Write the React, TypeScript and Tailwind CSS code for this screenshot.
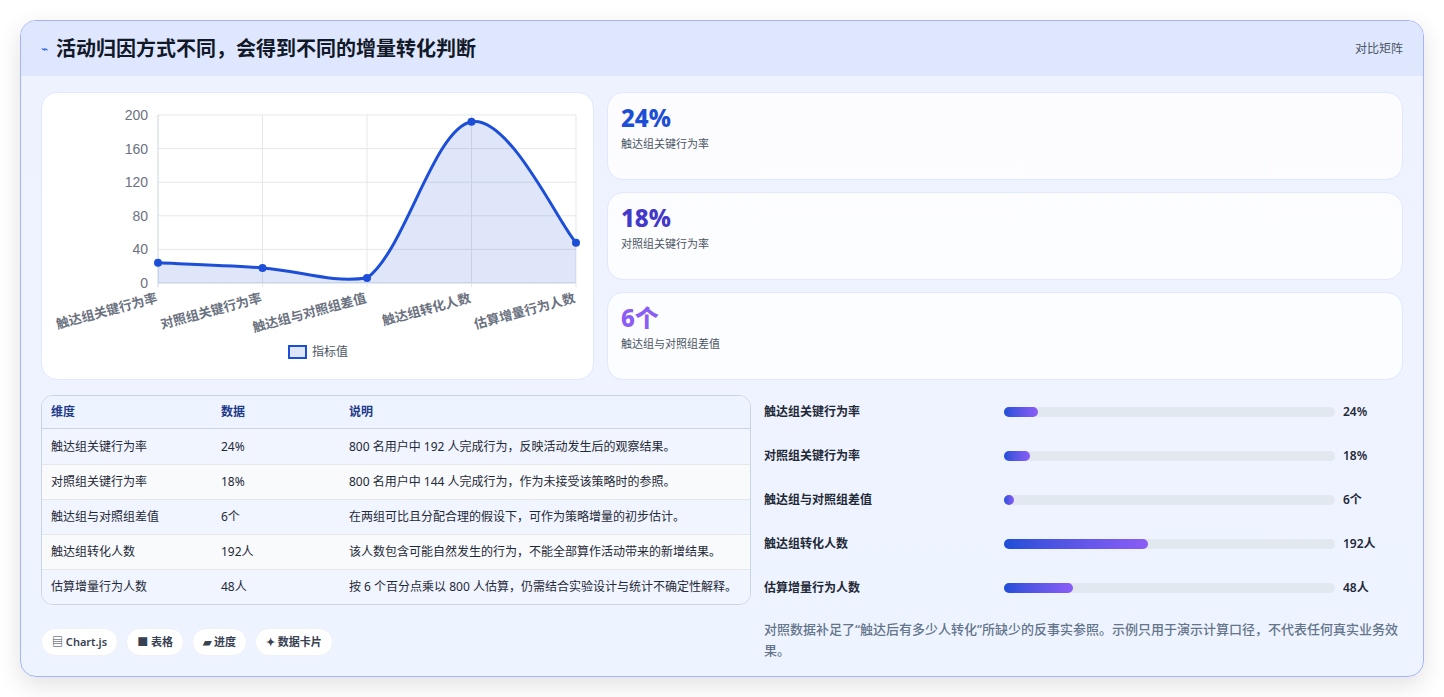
import React from "react";

const ROWS = [
  { k: "触达组关键行为率", v: "24%", d: "800 名用户中 192 人完成行为，反映活动发生后的观察结果。", w: 34 },
  { k: "对照组关键行为率", v: "18%", d: "800 名用户中 144 人完成行为，作为未接受该策略时的参照。", w: 26 },
  { k: "触达组与对照组差值", v: "6个", d: "在两组可比且分配合理的假设下，可作为策略增量的初步估计。", w: 10 },
  { k: "触达组转化人数", v: "192人", d: "该人数包含可能自然发生的行为，不能全部算作活动带来的新增结果。", w: 144 },
  { k: "估算增量行为人数", v: "48人", d: "按 6 个百分点乘以 800 人估算，仍需结合实验设计与统计不确定性解释。", w: 69 },
];

const VALS = [24, 18, 6, 192, 48];

function Chart() {
  const x0 = 116, x1 = 534, y0 = 22, y1 = 190;
  const pts = VALS.map((v, i) => [x0 + (i * (x1 - x0)) / 4, y1 - (v * (y1 - y0)) / 200]);
  const clamp = (y: number) => Math.min(y1, Math.max(y0 - 4, y));
  let d = `M${pts[0][0]},${pts[0][1]}`;
  for (let i = 0; i < pts.length - 1; i++) {
    const p0 = pts[Math.max(0, i - 1)], p1 = pts[i], p2 = pts[i + 1], p3 = pts[Math.min(pts.length - 1, i + 2)];
    const t = 0.18;
    const c1 = [p1[0] + (p2[0] - p0[0]) * t, clamp(p1[1] + (p2[1] - p0[1]) * t)];
    const c2 = [p2[0] - (p3[0] - p1[0]) * t, clamp(p2[1] - (p3[1] - p1[1]) * t)];
    d += ` C${c1[0]},${c1[1]} ${c2[0]},${c2[1]} ${p2[0]},${p2[1]}`;
  }
  const area = `${d} L${x1},${y1} L${x0},${y1} Z`;
  const labels = ["触达组关键行为率", "对照组关键行为率", "触达组与对照组差值", "触达组转化人数", "估算增量行为人数"];
  return (
    <svg width="553" height="287" className="block" style={{ fontFamily: '"Liberation Sans","Noto Sans CJK SC",sans-serif' }}>
      {[0, 40, 80, 120, 160, 200].map((t) => {
        const y = y1 - (t * (y1 - y0)) / 200;
        return (
          <g key={t}>
            <line x1={x0} x2={x1} y1={y} y2={y} stroke={t === 0 ? "#cbd5e1" : "#e5e7eb"} />
            <text x={x0 - 10} y={y + 5} textAnchor="end" fontSize="14" fill="#6b7280">{t}</text>
          </g>
        );
      })}
      {pts.map((p, i) => (
        <line key={i} x1={p[0]} x2={p[0]} y1={y0} y2={y1 + 4} stroke={i === 0 ? "#cbd5e1" : "#e5e7eb"} />
      ))}
      <path d={area} fill="rgba(29,78,216,0.14)" />
      <path d={d} fill="none" stroke="#1d4ed8" strokeWidth="3" />
      {pts.map((p, i) => (
        <circle key={i} cx={p[0]} cy={p[1]} r="4" fill="#1d4ed8" />
      ))}
      {labels.map((l, i) => (
        <text key={l} x={pts[i][0]} y={y1 + 19} textAnchor="end" fontSize="13" fontWeight="600" fill="#6b7280"
          transform={`rotate(-15 ${pts[i][0]} ${y1 + 19})`}>{l}</text>
      ))}
      <rect x="247" y="253" width="17" height="12" fill="rgba(29,78,216,0.14)" stroke="#1d4ed8" strokeWidth="2" />
      <text x="270" y="263" fontSize="12" fill="#4b5563">指标值</text>
    </svg>
  );
}

export default function App() {
  const font = { fontFamily: '"Noto Sans","Noto Sans CJK SC",sans-serif' };
  return (
    <div className="w-[1444px] h-[697px] bg-white p-5" style={font}>
      <div className="h-[657px] rounded-2xl border border-[#a5b4fc] bg-gradient-to-b from-[#eef2ff] to-[#eef4ff] shadow-[0_8px_24px_rgba(0,0,0,0.12)] overflow-hidden">
        <div className="h-[55px] bg-[#dfe7ff] flex items-center justify-between px-5">
          <div className="flex items-center gap-2">
            <span className="text-[#2563eb] text-xs">⌁</span>
            <span className="text-[20px] font-bold text-[#111827]">活动归因方式不同，会得到不同的增量转化判断</span>
          </div>
          <span className="text-xs text-[#4b5563]">对比矩阵</span>
        </div>
        <div className="px-5 pt-[16px]">
          <div className="flex gap-[13px]">
            <div className="w-[553px] h-[288px] bg-white rounded-2xl border border-[#e0e7ff]">
              <Chart />
            </div>
            <div className="flex-1 flex flex-col gap-3">
              {[
                ["24%", "触达组关键行为率", "text-[#1d4ed8]"],
                ["18%", "对照组关键行为率", "text-[#4338ca]"],
                ["6个", "触达组与对照组差值", "text-[#8b5cf6]"],
              ].map(([n, l, c]) => (
                <div key={l} className="h-[88px] bg-white/80 rounded-2xl border border-[#e0e7ff] px-[13px] pt-[9px]">
                  <div className={`text-[24px] font-extrabold leading-[32px] ${c}`}>{n}</div>
                  <div className="text-[11px] text-[#4b5563] mt-0.5">{l}</div>
                </div>
              ))}
            </div>
          </div>
          <div className="flex gap-[13px] mt-[15px]">
            <div className="w-[710px]">
              <div className="rounded-xl border border-[#cbd5e1] overflow-hidden text-[12px] text-[#1f2937]">
                <div className="flex h-[33px] items-center bg-[#eef4ff] text-[#1e3a8a] font-semibold border-b border-[#cbd5e1] px-[9px]">
                  <span className="w-[170px]">维度</span><span className="w-[128px]">数据</span><span>说明</span>
                </div>
                {ROWS.map((r, i) => (
                  <div key={r.k} className={`flex h-[35px] items-center px-[9px] ${i > 0 ? "border-t border-[#e5e7eb]" : ""} ${i % 2 ? "bg-[#f8fafc]" : "bg-[#f1f5ff]"}`}>
                    <span className="w-[170px]">{r.k}</span><span className="w-[128px]">{r.v}</span><span>{r.d}</span>
                  </div>
                ))}
              </div>
              <div className="flex gap-2 mt-[23px] text-[11px] font-semibold text-[#374151]">
                {["▤ Chart.js", "■ 表格", "▰ 进度", "✦ 数据卡片"].map((c) => (
                  <span key={c} className="h-[28px] px-2.5 flex items-center rounded-full bg-white border border-[#eef2f7]">{c}</span>
                ))}
              </div>
            </div>
            <div className="flex-1 text-[12px] text-[#1f2937] font-semibold -mt-[5px]">
              {ROWS.map((r) => (
                <div key={r.k} className="h-[44px] flex items-center">
                  <span className="w-[240px]">{r.k}</span>
                  <div className="w-[331px] h-[10px] rounded-full bg-[#e2e8f0]">
                    <div className="h-full rounded-full bg-gradient-to-r from-[#1d4ed8] to-[#8b5cf6]" style={{ width: r.w }} />
                  </div>
                  <span className="ml-2">{r.v}</span>
                </div>
              ))}
              <p className="mt-[9px] text-[13px] leading-[21px] text-[#64748b] font-medium">
                对照数据补足了“触达后有多少人转化”所缺少的反事实参照。示例只用于演示计算口径，不代表任何真实业务效果。
              </p>
            </div>
          </div>
        </div>
      </div>
    </div>
  );
}
